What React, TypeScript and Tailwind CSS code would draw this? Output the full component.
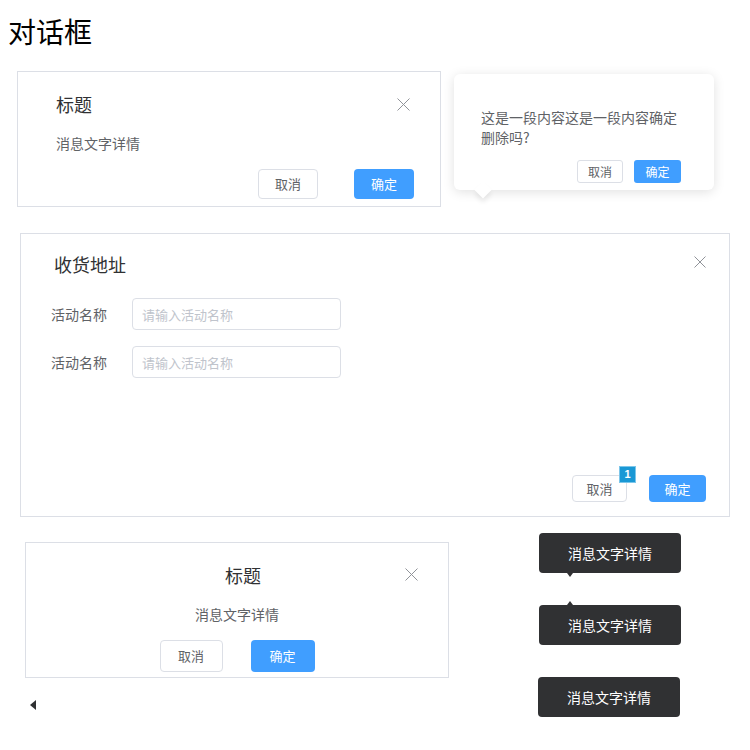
import React from "react";

const CloseIcon = ({ size = 13 }: { size?: number }) => (
  <svg width={size} height={size} viewBox={`0 0 ${size} ${size}`} fill="none" stroke="#909399" strokeWidth="1">
    <path d={`M0.5 0.5L${size - 0.5} ${size - 0.5}M${size - 0.5} 0.5L0.5 ${size - 0.5}`} />
  </svg>
);

const Tooltip = ({ arrow, className = "" }: { arrow?: "top" | "bottom"; className?: string }) => (
  <div className={`relative flex h-[40px] w-[142px] items-center justify-center rounded-[4px] bg-[#303133] text-[14px] text-white ${className}`}>
    消息文字详情
    {arrow === "bottom" && (
      <div className="absolute left-[28px] top-full h-0 w-0 border-x-[3px] border-t-[4px] border-x-transparent border-t-[#303133]" />
    )}
    {arrow === "top" && (
      <div className="absolute bottom-full left-[28px] h-0 w-0 border-x-[3px] border-b-[4px] border-x-transparent border-b-[#303133]" />
    )}
  </div>
);

export default function App() {
  return (
    <div className="min-h-[750px] w-[750px] bg-white font-[family-name:'Noto_Sans_CJK_SC',sans-serif] text-[#303133]">
      <h1 className="ml-[8px] pt-[11px] text-[28px] font-normal leading-[40px] text-black">对话框</h1>

      <div className="mt-[20px] flex items-start">
        {/* Card 1 */}
        <div className="relative ml-[17px] flex h-[136px] w-[424px] flex-col border border-[#dcdfe6] pt-[20px]">
          <div className="pl-[38px] text-[18px] leading-[24px] text-[#303133]">标题</div>
          <div className="mt-[17px] pl-[38px] text-[14px] leading-[20px] text-[#606266]">消息文字详情</div>
          <div className="mt-[16px] flex justify-end gap-[36px] pr-[26px]">
            <button className="h-[30px] w-[60px] rounded-[4px] border border-[#dcdfe6] bg-white text-[13px] text-[#606266]">取消</button>
            <button className="h-[30px] w-[60px] rounded-[4px] bg-[#409eff] text-[13px] text-white">确定</button>
          </div>
          <div className="absolute right-[30px] top-[26px] flex">
            <CloseIcon />
          </div>
        </div>

        {/* Popconfirm */}
        <div className="relative ml-[13px] mt-[3px] w-[260px] rounded-[6px] bg-white pb-[7px] pl-[27px] pr-[33px] pt-[33px] shadow-[0_2px_12px_rgba(0,0,0,0.12)]">
          <div className="absolute -bottom-[6px] left-[23px] h-[12px] w-[12px] rotate-45 bg-white shadow-[3px_3px_5px_rgba(0,0,0,0.08)]" />
          <div className="relative text-[14px] leading-[20px] text-[#606266]">这是一段内容这是一段内容确定删除吗?</div>
          <div className="relative mt-[13px] flex justify-end gap-[11px]">
            <button className="h-[23px] w-[46px] rounded-[3px] border border-[#dcdfe6] bg-white text-[12px] text-[#606266]">取消</button>
            <button className="h-[23px] w-[47px] rounded-[3px] bg-[#409eff] text-[12px] text-white">确定</button>
          </div>
        </div>
      </div>

      {/* Card 2 */}
      <div className="relative ml-[20px] mt-[26px] flex h-[284px] w-[710px] flex-col border border-[#dcdfe6] pb-[14px] pt-[18px]">
        <div className="pl-[33px] text-[18px] leading-[24px] text-[#303133]">收货地址</div>
        <div className="mt-[22px] flex flex-col gap-[16px] pl-[30px]">
          {[0, 1].map((i) => (
            <div key={i} className="flex items-center">
              <div className="w-[81px] text-[14px] leading-[20px] text-[#606266]">活动名称</div>
              <input
                className="h-[32px] w-[209px] rounded-[4px] border border-[#dcdfe6] pl-[9px] text-[13px] text-[#606266] outline-none placeholder:text-[#c0c4cc]"
                placeholder="请输入活动名称"
              />
            </div>
          ))}
        </div>
        <div className="mt-auto flex justify-end gap-[22px] pr-[23px]">
          <div className="relative">
            <button className="h-[27px] w-[55px] rounded-[4px] border border-[#dcdfe6] bg-white text-[13px] text-[#606266]">取消</button>
            <span className="absolute -right-[9px] -top-[9px] flex h-[17px] w-[17px] items-center justify-center border border-[#7cc6ea] bg-[#1a98d5] font-[family-name:'Liberation_Sans',sans-serif] text-[11px] font-bold text-white">1</span>
          </div>
          <button className="h-[27px] w-[57px] rounded-[4px] bg-[#409eff] text-[13px] text-white">确定</button>
        </div>
        <div className="absolute right-[23px] top-[22px] flex">
          <CloseIcon size={12} />
        </div>
      </div>

      <div className="mt-[16px] flex items-start">
        <div className="flex flex-col">
          {/* Card 3 */}
          <div className="relative ml-[25px] mt-[9px] flex h-[136px] w-[424px] flex-col items-center border border-[#dcdfe6] pt-[20px]">
            <div className="pl-[12px] text-[18px] leading-[24px] text-[#303133]">标题</div>
            <div className="mt-[17px] text-[14px] leading-[20px] text-[#606266]">消息文字详情</div>
            <div className="mt-[16px] flex gap-[28px]">
              <button className="h-[32px] w-[63px] rounded-[4px] border border-[#dcdfe6] bg-white text-[13px] text-[#606266]">取消</button>
              <button className="h-[32px] w-[64px] rounded-[4px] bg-[#409eff] text-[13px] text-white">确定</button>
            </div>
            <div className="absolute right-[30px] top-[25px] flex">
              <CloseIcon />
            </div>
          </div>
          <div className="ml-[30px] mt-[22px] h-0 w-0 border-y-[5px] border-r-[6px] border-y-transparent border-r-[#303133]" />
        </div>

        <div className="ml-[90px] flex flex-col gap-[32px]">
          <Tooltip arrow="bottom" />
          <Tooltip arrow="top" />
          <Tooltip className="-ml-px" />
        </div>
      </div>
    </div>
  );
}
